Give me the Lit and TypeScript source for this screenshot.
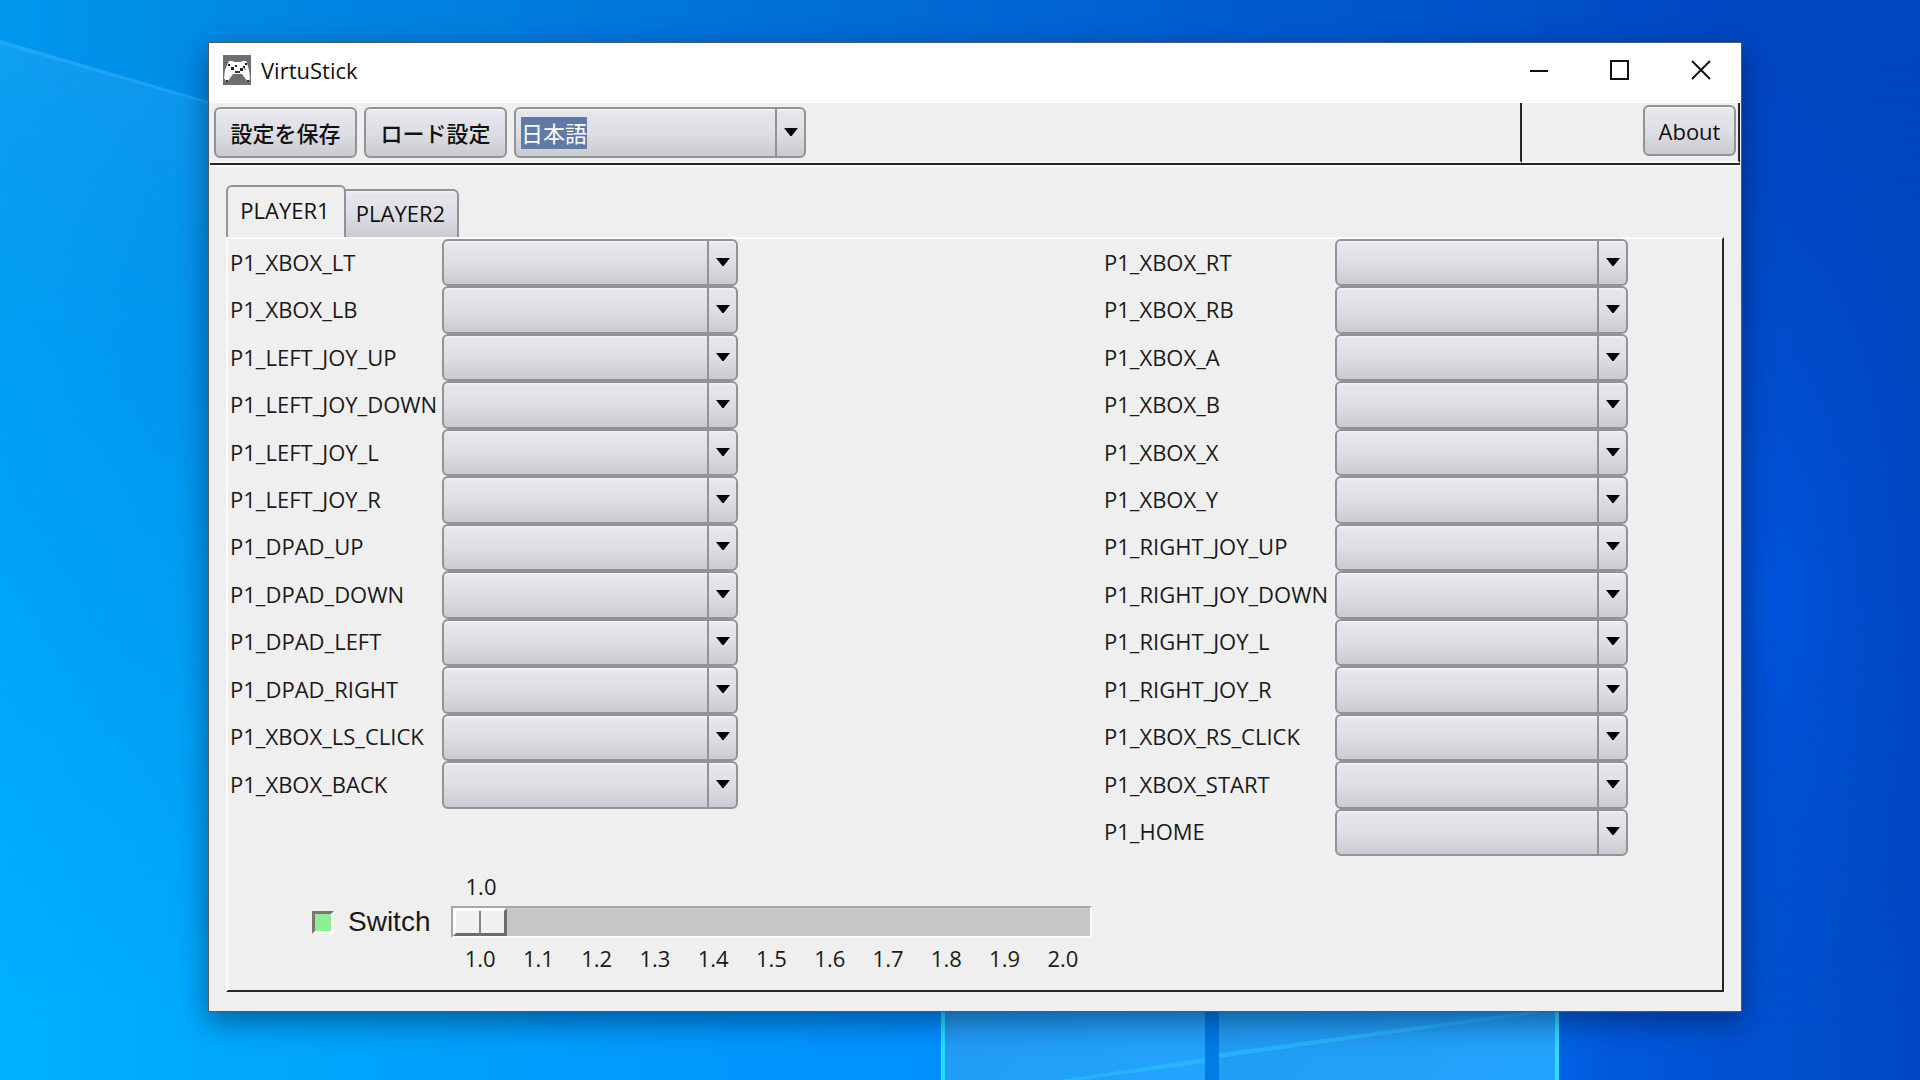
import { LitElement, html, css, svg } from "lit";
import { customElement, property, state } from "lit/decorators.js";

const LEFT_KEYS = [
  "XBOX_LT", "XBOX_LB", "LEFT_JOY_UP", "LEFT_JOY_DOWN", "LEFT_JOY_L", "LEFT_JOY_R",
  "DPAD_UP", "DPAD_DOWN", "DPAD_LEFT", "DPAD_RIGHT", "XBOX_LS_CLICK", "XBOX_BACK",
];
const RIGHT_KEYS = [
  "XBOX_RT", "XBOX_RB", "XBOX_A", "XBOX_B", "XBOX_X", "XBOX_Y",
  "RIGHT_JOY_UP", "RIGHT_JOY_DOWN", "RIGHT_JOY_L", "RIGHT_JOY_R", "XBOX_RS_CLICK", "XBOX_START", "HOME",
];
const TICKS = ["1.0", "1.1", "1.2", "1.3", "1.4", "1.5", "1.6", "1.7", "1.8", "1.9", "2.0"];

const arrow = svg`<svg class="arrow" viewBox="0 0 14 8" aria-hidden="true"><path d="M0 0H14L7.6 8H6.4Z" fill="#000"/></svg>`;

const combo = css`
  .combo {
    display: grid;
    min-width: 0;
  }
  .combo > * {
    grid-area: 1 / 1;
  }
  .combo select {
    appearance: none;
    width: 100%;
    height: 100%;
    margin: 0;
    padding: 0 32px 0 5px;
    border: 2px solid #929397;
    border-radius: 6px;
    color: #111;
    font: inherit;
    background:
      linear-gradient(#929397, #929397) right 27px top 0 / 2px 100% no-repeat,
      linear-gradient(#f2f3f7, #e6e7ed 3px, #dedfe5 50%, #cacbd1);
    outline: none;
  }
  .combo .arrow {
    width: 14px;
    height: 8px;
    justify-self: end;
    align-self: center;
    margin: 0 8px 2px 0;
    pointer-events: none;
  }
`;

@customElement("key-bindings")
class KeyBindings extends LitElement {
  @property({ attribute: false }) keys: string[] = [];
  @property() player = "P1";

  static styles = [
    combo,
    css`
      :host {
        display: grid;
        grid-template-columns: var(--label-width) minmax(0, var(--combo-width));
        grid-template-rows: repeat(13, minmax(46px, 1fr));
      }
      label {
        align-self: center;
        padding: 0 0 2px 2px;
        white-space: nowrap;
      }
    `,
  ];

  render() {
    return this.keys.map((key) => {
      const name = `${this.player}_${key}`;
      return html`
        <label for=${name}>${name}</label>
        <div class="combo"><select id=${name}><option value=""></option></select>${arrow}</div>
      `;
    });
  }
}

@customElement("app-root")
class AppRoot extends LitElement {
  @state() player = 1;
  @state() speed = 1;

  static styles = [
    combo,
    css`
      * {
        box-sizing: border-box;
      }
      :host {
        display: block;
        font: 22px/30px "Open Sans", "Noto Sans CJK JP", sans-serif;
        color: #1a1a1a;
      }
      .desktop {
        position: relative;
        display: flex;
        min-height: 100vh;
        padding: 42px 178px 68px 208px;
        background: #0078e0;
        overflow: hidden;
      }
      .wallpaper {
        position: absolute;
        inset: 0;
        width: 100%;
        height: 100%;
      }
      .window {
        position: relative;
        flex: 1;
        min-width: 0;
        display: flex;
        flex-direction: column;
        border: 1px solid #4d5a66;
        background: #efefef;
        box-shadow: 0 10px 28px rgba(0, 10, 40, 0.45);
      }
      .titlebar {
        display: flex;
        align-items: center;
        height: 57px;
        padding: 0 0 4px 14px;
        background: #fff;
      }
      .logo {
        width: 28px;
        height: 30px;
        margin-right: 10px;
      }
      h1 {
        flex: 1;
        margin: 0;
        font-size: 22px;
        font-weight: 400;
        color: #111;
      }
      button {
        margin: 0;
        font: inherit;
        color: #111;
      }
      .caption {
        width: 81px;
        height: 50px;
        padding: 0;
        border: 0;
        background: none;
        display: grid;
        place-items: center;
      }
      .caption svg {
        width: 20px;
        height: 20px;
      }
      .toolbar {
        display: flex;
        margin: 0 1px;
        border-top: 3px solid #fafafa;
        border-bottom: 2px solid #262826;
        box-shadow: 0 2px 0 #fafafa;
      }
      .tools {
        flex: 1;
        display: flex;
        gap: 7px;
        padding: 4px 4px 3px;
        border-right: 2px solid #262826;
        border-bottom: 2px solid #f6f6f6;
      }
      .aside {
        display: flex;
        justify-content: flex-end;
        width: 218px;
        padding: 2px 2px 4px;
        border-right: 2px solid #262826;
        border-bottom: 2px solid #fafafa;
      }
      .push {
        height: 51px;
        padding: 0;
        border: 2px solid #929397;
        border-radius: 6px;
        background: linear-gradient(#f2f3f7, #e6e7ed 3px, #dedfe5 50%, #cacbd1);
      }
      .tools .push {
        width: 143px;
        font-weight: 500;
      }
      .aside .push {
        width: 93px;
      }
      .tools .combo {
        width: 292px;
        height: 51px;
      }
      .tools .combo select {
        color: #fff;
        background:
          linear-gradient(#5f7aa6, #5f7aa6) left 5px center / 66px 32px no-repeat,
          linear-gradient(#929397, #929397) right 27px top 0 / 2px 100% no-repeat,
          linear-gradient(#f2f3f7, #e6e7ed 3px, #dedfe5 50%, #cacbd1);
      }
      .tools .combo option {
        color: #111;
      }
      .content {
        flex: 1;
        display: flex;
        flex-direction: column;
        padding: 20px 17px 19px;
      }
      .tabs {
        display: flex;
        align-items: flex-end;
      }
      .tab {
        width: 113px;
        height: 48px;
        padding: 0 2px 2px 0;
        border: 2px solid #929397;
        border-left: 0;
        border-bottom: 0;
        border-radius: 0 6px 0 0;
        background: linear-gradient(#f2f3f7, #e6e7ed 3px, #dedfe5 50%, #cacbd1);
      }
      .tab[aria-selected="true"] {
        width: 120px;
        height: 52px;
        padding-bottom: 4px;
        border-left: 2px solid #929397;
        border-radius: 6px 6px 0 0;
        background: #efefef;
      }
      .panel {
        flex: 1;
        display: grid;
        grid-template-columns: 874fr 620fr;
        grid-template-rows: 1fr auto;
        border: 2px solid #fbfbfb;
        border-right-color: #262826;
        border-bottom-color: #262826;
      }
      .left {
        --label-width: 214px;
        --combo-width: 296px;
      }
      .right {
        --label-width: 233px;
        --combo-width: 293px;
      }
      .speed {
        display: flex;
        padding: 15px 10px 17px 84px;
      }
      .switch {
        display: flex;
        align-items: center;
        gap: 14px;
        width: 139px;
        font: 28px/32px "Liberation Sans", sans-serif;
      }
      .switch input {
        appearance: none;
        width: 22px;
        height: 23px;
        margin: 0;
        border: 3px solid;
        border-color: #777 #fdfdfd #fdfdfd #777;
        background: #f4f4f4;
      }
      .switch input:checked {
        background: #90ee90;
      }
      .scale {
        flex: 1;
      }
      .scale output,
      .ticks span {
        display: block;
        text-align: center;
      }
      .scale output {
        width: 60px;
        margin-bottom: 5px;
      }
      .ticks {
        display: grid;
        grid-template-columns: repeat(11, 1fr);
        margin-top: 5px;
      }
      .scale input {
        appearance: none;
        display: block;
        width: 100%;
        height: 32px;
        margin: 0;
        border: 2px solid;
        border-color: #a6a6a6 #fcfcfc #fcfcfc #a6a6a6;
        background: #c6c6c6;
      }
      .scale input::-webkit-slider-thumb {
        appearance: none;
        width: 54px;
        height: 28px;
        border: 3px solid;
        border-color: #fff #6c6c6c #6c6c6c #fff;
        background: linear-gradient(#858585, #858585) 23px 0 / 2px 100% no-repeat #f0f0f0;
      }
    `,
  ];

  private wallpaper() {
    return html`<svg class="wallpaper" viewBox="0 0 1920 1080" preserveAspectRatio="none" aria-hidden="true">
      <defs>
        <linearGradient id="base" x1="0" y1="0" x2="1" y2="0">
          <stop offset="0" stop-color="#0098ee" />
          <stop offset="0.12" stop-color="#008ae4" />
          <stop offset="0.45" stop-color="#006cd6" />
          <stop offset="0.75" stop-color="#0054ca" />
          <stop offset="0.9" stop-color="#0047c2" />
          <stop offset="1" stop-color="#0046c0" />
        </linearGradient>
        <linearGradient id="low" x1="0" y1="0" x2="1" y2="0">
          <stop offset="0" stop-color="#00b0ff" />
          <stop offset="0.25" stop-color="#00a0fb" />
          <stop offset="0.5" stop-color="#0090ff" />
          <stop offset="0.78" stop-color="#0070f0" />
          <stop offset="0.84" stop-color="#0058dc" />
          <stop offset="1" stop-color="#0048c2" />
        </linearGradient>
        <linearGradient id="fade" x1="0" y1="0" x2="0" y2="1">
          <stop offset="0.05" stop-color="#000" />
          <stop offset="0.95" stop-color="#fff" />
        </linearGradient>
        <radialGradient id="glow" cx="0.5" cy="0.5" r="0.5">
          <stop offset="0" stop-color="#0056e2" stop-opacity="0.8" />
          <stop offset="1" stop-color="#0050d0" stop-opacity="0" />
        </radialGradient>
        <linearGradient id="pane" x1="0" y1="0" x2="1" y2="1">
          <stop offset="0" stop-color="#2296ea" />
          <stop offset="1" stop-color="#22a4ff" />
        </linearGradient>
        <linearGradient id="ray" x1="0" y1="0" x2="0" y2="1">
          <stop offset="0" stop-color="#38b4ff" stop-opacity="0.28" />
          <stop offset="1" stop-color="#18a4ff" stop-opacity="0" />
        </linearGradient>
        <mask id="m"><rect width="1920" height="1080" fill="url(#fade)" /></mask>
      </defs>
      <rect width="1920" height="1080" fill="url(#base)" />
      <rect width="1920" height="1080" fill="url(#low)" mask="url(#m)" />
      <ellipse cx="1770" cy="600" rx="150" ry="440" fill="url(#glow)" />
      <path d="M0 40L208 101V400L0 300Z" fill="url(#ray)" />
      <path d="M0 40L208 101V104L0 44Z" fill="#40b8ff" opacity="0.35" />
      <rect x="942" y="800" width="263" height="280" fill="url(#pane)" />
      <rect x="1205" y="800" width="14" height="280" fill="#007ce4" />
      <rect x="1219" y="800" width="339" height="280" fill="url(#pane)" />
      <path d="M1080 1080L1205 1063V1058L1060 1080Z M1219 1058L1540 1013V1010L1219 1053Z" fill="#2cc4ff" opacity="0.55" />
      <rect x="941" y="800" width="4" height="280" fill="#22e0ff" />
      <rect x="1555" y="800" width="4" height="280" fill="#38d8ff" />
    </svg>`;
  }

  private tab(n: number) {
    return html`<button class="tab" role="tab" aria-selected=${this.player === n ? "true" : "false"}
      @click=${() => (this.player = n)}>PLAYER${n}</button>`;
  }

  render() {
    const player = `P${this.player}`;
    return html`
      <div class="desktop">
        ${this.wallpaper()}
        <main class="window">
          <header class="titlebar">
            <svg class="logo" viewBox="0 0 28 30" aria-hidden="true">
              <rect width="28" height="30" fill="#6d6f6d" />
              <path d="M5 8L6 6H10L11 7H18L19 6H23L24 8L26 15L27 23L26 26H24L19 19H10L5 26H3L1 23L2 15Z" fill="#fff" />
              <path d="M5 9H7V11H5Z M8 12H11V15H8Z M17 13H20V16H17Z M12 10H14V12H12Z M22 8H24V10H22Z M20 11H22V13H20Z" fill="#222" />
              <path d="M12 16H17V18H12Z M3 25H5V27H3Z M24 25H26V27H24Z" fill="#333" />
              <rect x="21" y="13" width="2" height="2" fill="#b9bd6a" />
            </svg>
            <h1>VirtuStick</h1>
            <button class="caption" aria-label="Minimize">
              <svg viewBox="0 0 20 20"><path d="M1 11H19" stroke="#111" stroke-width="2" /></svg>
            </button>
            <button class="caption" aria-label="Maximize">
              <svg viewBox="0 0 20 20"><rect x="1" y="1" width="17" height="18" fill="none" stroke="#111" stroke-width="2" /></svg>
            </button>
            <button class="caption" aria-label="Close">
              <svg viewBox="0 0 20 20"><path d="M1 1L19 19M19 1L1 19" stroke="#111" stroke-width="2" /></svg>
            </button>
          </header>
          <div class="toolbar">
            <div class="tools">
              <button class="push">設定を保存</button>
              <button class="push">ロード設定</button>
              <div class="combo">
                <select aria-label="言語"><option>日本語</option></select>${arrow}
              </div>
            </div>
            <div class="aside"><button class="push">About</button></div>
          </div>
          <div class="content">
            <div class="tabs" role="tablist">${this.tab(1)}${this.tab(2)}</div>
            <section class="panel" role="tabpanel">
              <key-bindings class="left" .keys=${LEFT_KEYS} .player=${player}></key-bindings>
              <key-bindings class="right" .keys=${RIGHT_KEYS} .player=${player}></key-bindings>
              <div class="speed">
                <label class="switch"><input type="checkbox" checked />Switch</label>
                <div class="scale">
                  <output for="speed">${this.speed.toFixed(1)}</output>
                  <input id="speed" type="range" min="1" max="2" step="0.1" value="1" aria-label="Switch"
                    @input=${(e: Event) => (this.speed = Number((e.target as HTMLInputElement).value))} />
                  <div class="ticks">${TICKS.map((t) => html`<span>${t}</span>`)}</div>
                </div>
              </div>
            </section>
          </div>
        </main>
      </div>
    `;
  }
}
